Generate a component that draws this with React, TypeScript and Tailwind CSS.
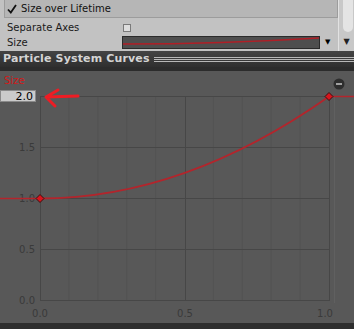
import React from "react";

const font = { fontFamily: '"DejaVu Sans", "Liberation Sans", sans-serif' };

function CurveArea() {
  const minor: number[] = [];
  for (let i = 1; i < 10; i++) if (i !== 5) minor.push(40 + 28.9 * i);
  const yLabels = [
    { v: "1.5", y: 76 },
    { v: "1.0", y: 127 },
    { v: "0.5", y: 178 },
    { v: "0.0", y: 229 },
  ];
  return (
    <div className="relative h-[252px] bg-[#585858]">
      <svg width="354" height="252" className="absolute left-0 top-0" style={font}>
        {minor.map((x) => (
          <line key={x} x1={x} y1={25} x2={x} y2={229} stroke="#535353" strokeWidth="1" />
        ))}
        {[25, 76, 127, 178, 229].map((y) => (
          <line key={y} x1={40} y1={y + 0.5} x2={329} y2={y + 0.5} stroke="#474747" strokeWidth="1" />
        ))}
        {[40, 185, 329].map((x) => (
          <line key={x} x1={x + 0.5} y1={25} x2={x + 0.5} y2={230} stroke="#474747" strokeWidth="1" />
        ))}
        <line x1="334.5" y1="25" x2="334.5" y2="232" stroke="#606060" strokeWidth="1" />
        {yLabels.map((l) => (
          <text key={l.v} x="35" y={l.y + 4} textAnchor="end" fontSize="10" fill="#3a3a3a">
            {l.v}
          </text>
        ))}
        <text x="40" y="246" textAnchor="middle" fontSize="10" fill="#3a3a3a">0.0</text>
        <text x="185" y="246" textAnchor="middle" fontSize="10" fill="#3a3a3a">0.5</text>
        <text x="325" y="246" textAnchor="middle" fontSize="10" fill="#3a3a3a">1.0</text>
        <line x1="0" y1="127.5" x2="40" y2="127.5" stroke="#b3252c" strokeWidth="1.5" />
        <line x1="329" y1="25.5" x2="354" y2="25.5" stroke="#b3252c" strokeWidth="1.5" />
        <path d="M40 127.5 Q184.5 127.5 329 25.5" fill="none" stroke="#b3252c" strokeWidth="1.8" />
        <polygon points="40,123.5 44,127.5 40,131.5 36,127.5" fill="#d8141c" stroke="#3a1010" strokeWidth="1" />
        <polygon points="329,21.5 333,25.5 329,29.5 325,25.5" fill="#d8141c" stroke="#3a1010" strokeWidth="1" />
        <text x="4" y="13" fontSize="10" fill="#d21a1a">Size</text>
        <path d="M46 26 L78 25 M46 26 L58 19 M46 26 L55 35" fill="none" stroke="#ee1c24" strokeWidth="3" strokeLinecap="round" />
        <circle cx="339" cy="13" r="5.5" fill="#2e2e2e" />
        <line x1="336" y1="13" x2="342" y2="13" stroke="#c8c8c8" strokeWidth="1.5" />
      </svg>
      <div
        className="absolute left-0 top-[19px] flex h-[12px] w-[36px] items-center justify-end border border-[#8a8a8a] bg-[#cbcbcb] pr-[2px] text-[11px] leading-none text-black"
        style={font}
      >
        2.0
      </div>
    </div>
  );
}

export default function App() {
  return (
    <div className="h-[329px] w-[354px] overflow-hidden bg-[#2e2e2e]" style={font}>
      <div className="flex h-[51px] bg-[#c2c2c2]">
        <div className="flex-1 pl-[4px]">
          <div className="mt-[-1px] flex h-[19px] w-[334px] items-center border border-[#9c9c9c] bg-[#b6b6b6] pl-[2px] text-[10px] text-[#111]">
            <svg width="10" height="10" viewBox="0 0 10 10" className="mr-[4px]">
              <path d="M1 5.5 L3.8 8.5 L9 1" fill="none" stroke="#111" strokeWidth="1.8" />
            </svg>
            Size over Lifetime
          </div>
          <div className="mt-[2px] flex h-[15px] items-center pl-[3px] text-[10px] text-[#1a1a1a]">
            <span className="w-[116px]">Separate Axes</span>
            <span className="h-[8px] w-[8px] border border-[#7a7a7a] bg-[#dedede]" />
          </div>
          <div className="flex h-[15px] items-center pl-[3px] text-[10px] text-[#1a1a1a]">
            <span className="w-[115px]">Size</span>
            <div className="h-[13px] w-[198px] border border-[#2a2a2a] bg-[#4e4e4e]">
              <svg width="196" height="11">
                <path d="M0 7 Q98 7 196 1" fill="none" stroke="#b01e26" strokeWidth="1.5" />
              </svg>
            </div>
            <span className="ml-[5px] text-[7px] text-black">▼</span>
          </div>
        </div>
        <div className="flex w-[16px] flex-col items-center border-l border-[#e2e2e2] bg-[#c8c8c8]">
          <div className="ml-[4px] h-[32px] w-[10px] self-stretch rounded-b-[5px] bg-[#e4e4e4]" />
          <span className="mt-[6px] text-[8px] leading-none text-[#222]">▼</span>
        </div>
      </div>
      <div className="flex h-[16px] items-center bg-gradient-to-b from-[#444] to-[#2f2f2f] pl-[3px]">
        <span className="text-[11px] font-bold tracking-[0.15px] text-[#d4d4d4]">Particle System Curves</span>
        <div className="ml-[4px] flex flex-1 flex-col gap-[1px]">
          <div className="h-[1px] bg-[#b8b8b8]" />
          <div className="h-[1px] bg-[#b8b8b8]" />
          <div className="h-[1px] bg-[#b8b8b8]" />
        </div>
      </div>
      <div className="h-[4px] bg-[#2c2c2c]" />
      <CurveArea />
    </div>
  );
}
